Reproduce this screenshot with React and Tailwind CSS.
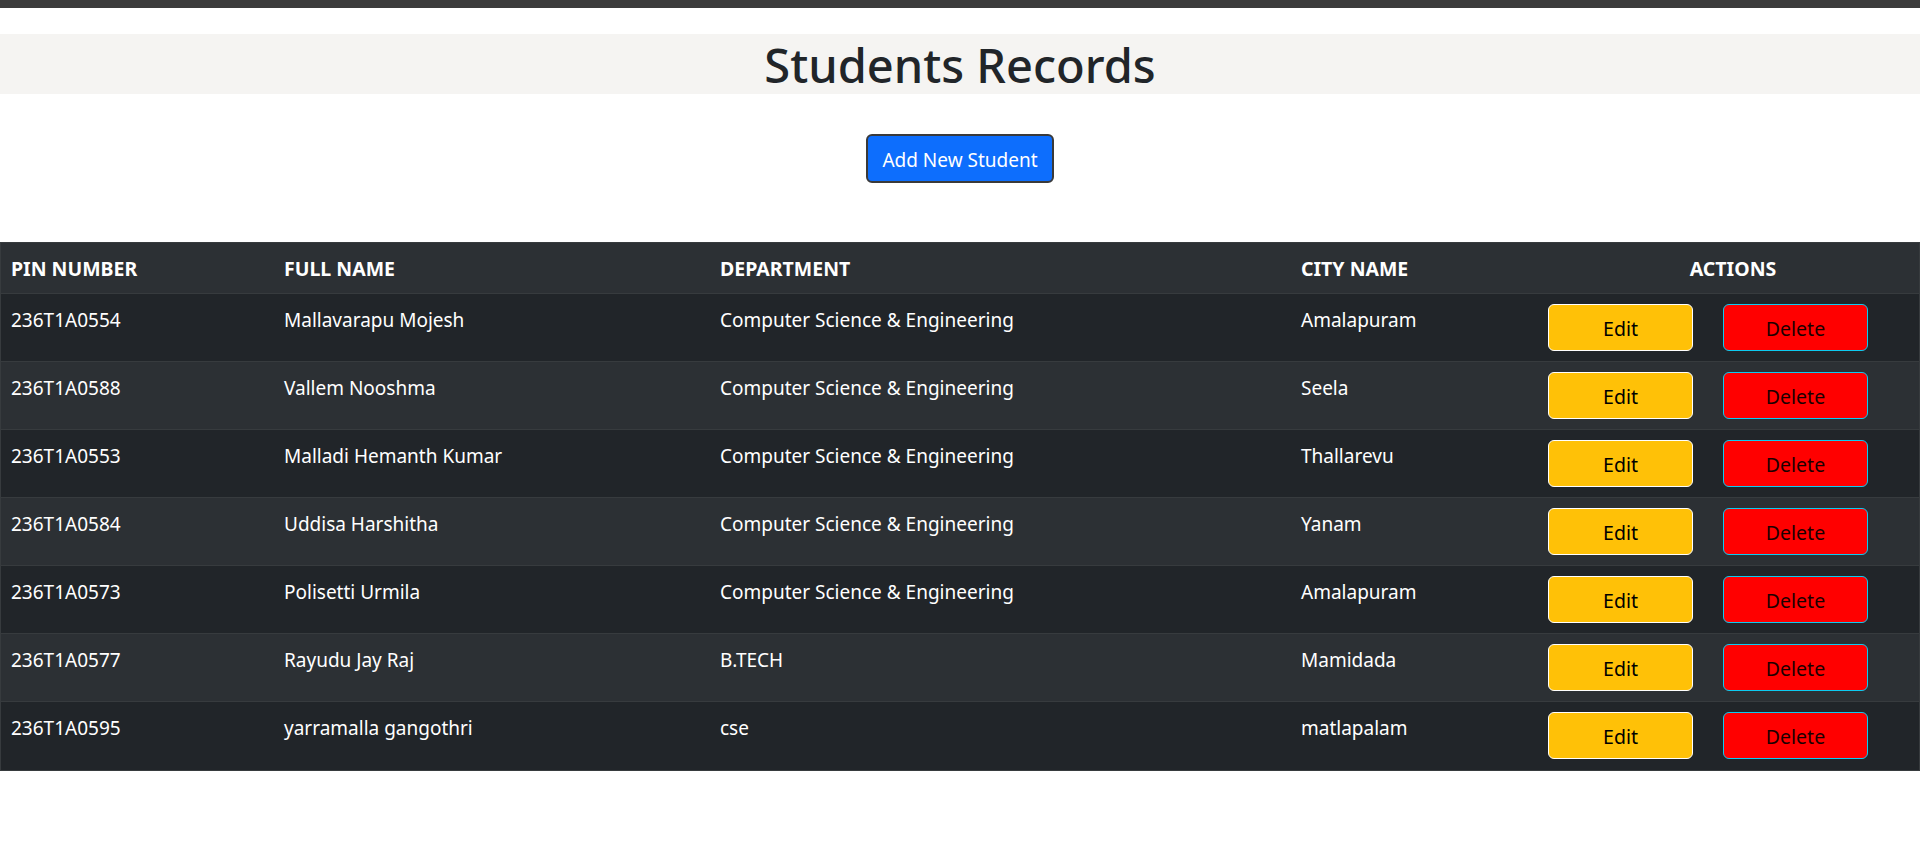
import React from "react";

const rows = [
  ["236T1A0554", "Mallavarapu Mojesh", "Computer Science & Engineering", "Amalapuram"],
  ["236T1A0588", "Vallem Nooshma", "Computer Science & Engineering", "Seela"],
  ["236T1A0553", "Malladi Hemanth Kumar", "Computer Science & Engineering", "Thallarevu"],
  ["236T1A0584", "Uddisa Harshitha", "Computer Science & Engineering", "Yanam"],
  ["236T1A0573", "Polisetti Urmila", "Computer Science & Engineering", "Amalapuram"],
  ["236T1A0577", "Rayudu Jay Raj", "B.TECH", "Mamidada"],
  ["236T1A0595", "yarramalla gangothri", "cse", "matlapalam"],
];

const grid = "grid grid-cols-[273px_436px_581px_256px_1fr]";

export default function App() {
  return (
    <div className="min-h-[851px] bg-white font-['Noto_Sans',sans-serif] text-[#212529]">
      <div className="h-[8px] bg-[#3c3c3c]" />
      <div className="mt-[26px] flex h-[60px] items-center justify-center bg-[#f5f4f2]">
        <h1 className="pt-[2px] text-[47px] leading-[58px] font-medium text-[#212529]">Students Records</h1>
      </div>
      <div className="flex justify-center pt-[40px]">
        <button className="h-[49px] w-[188px] rounded-[6px] border-2 border-[#3a3a3a] bg-[#0d6efd] pt-[2px] text-[19px] leading-[30px] text-white">
          Add New Student
        </button>
      </div>
      <div className="mt-[59px] border border-[#373b3e] text-white">
        <div className={`${grid} h-[51px] border-b border-[#373b3e] bg-[#2c3034] text-[19.5px] font-bold leading-[30px]`}>
          <div className="px-[10px] pt-[11px]">PIN NUMBER</div>
          <div className="px-[10px] pt-[11px]">FULL NAME</div>
          <div className="px-[10px] pt-[11px]">DEPARTMENT</div>
          <div className="px-[10px] pt-[11px]">CITY NAME</div>
          <div className="px-[10px] pt-[11px] text-center">ACTIONS</div>
        </div>
        {rows.map((r, i) => (
          <div
            key={r[0]}
            className={`${grid} h-[68px] text-[19px] leading-[30px] ${i < rows.length - 1 ? "border-b border-[#373b3e]" : ""} ${i % 2 === 0 ? "bg-[#212529]" : "bg-[#2c3034]"}`}
          >
            <div className="px-[10px] pt-[11px]">{r[0]}</div>
            <div className="px-[10px] pt-[11px]">{r[1]}</div>
            <div className="px-[10px] pt-[11px]">{r[2]}</div>
            <div className="px-[10px] pt-[11px]">{r[3]}</div>
            <div className="flex gap-[30px] pt-[10px] pl-[1px]">
              <button className="h-[47px] w-[145px] rounded-[6px] border border-white bg-[#ffc107] pt-[2px] text-[19.5px] leading-[30px] text-black">
                Edit
              </button>
              <button className="h-[47px] w-[145px] rounded-[6px] border border-[#0dcaf0] bg-[#ff0000] pt-[2px] text-[19.5px] leading-[30px] text-[#1a0000]">
                Delete
              </button>
            </div>
          </div>
        ))}
      </div>
    </div>
  );
}
